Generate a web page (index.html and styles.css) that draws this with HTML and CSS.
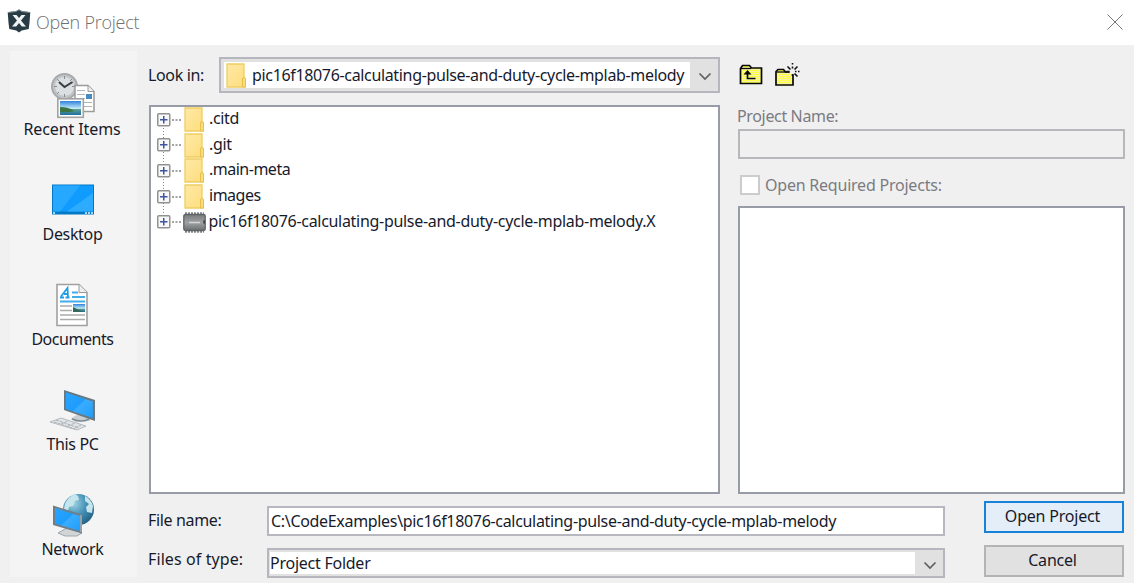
FILE: index.html
```html
<!DOCTYPE html>
<html lang="en">
<head>
<meta charset="utf-8">
<title>Open Project</title>
<link rel="stylesheet" href="styles.css">
</head>
<body>
<svg class="defs" width="0" height="0">
  <defs>
    <linearGradient id="fold" x1="0" y1="0" x2="1" y2="1"><stop offset="0" stop-color="#ffe9a6"/><stop offset="1" stop-color="#fddd7d"/></linearGradient>
    <linearGradient id="screen" x1="0" y1="0" x2="1" y2="1"><stop offset="0" stop-color="#2aa4ff"/><stop offset=".48" stop-color="#1e9dfd"/><stop offset=".52" stop-color="#3aacff"/><stop offset="1" stop-color="#1f9dfb"/></linearGradient>
    <linearGradient id="photo" x1="0" y1="0" x2="0" y2="1"><stop offset="0" stop-color="#2f83dc"/><stop offset=".55" stop-color="#c8ecfa"/><stop offset=".6" stop-color="#5c9f8b"/><stop offset="1" stop-color="#1c6fa8"/></linearGradient>
    <linearGradient id="chip" x1="0" y1="0" x2="0" y2="1"><stop offset="0" stop-color="#777a7b"/><stop offset=".5" stop-color="#a0a3a3"/><stop offset="1" stop-color="#6b6e6f"/></linearGradient>
    <radialGradient id="globe" cx=".35" cy=".3" r=".8"><stop offset="0" stop-color="#9fd3e4"/><stop offset=".5" stop-color="#4491b5"/><stop offset="1" stop-color="#1e5c80"/></radialGradient>
    <pattern id="dither" width="2" height="2" patternUnits="userSpaceOnUse"><rect width="2" height="2" fill="#ffff45"/><rect width="1" height="1" fill="#f4f4a4"/><rect x="1" y="1" width="1" height="1" fill="#f4f4a4"/></pattern>
    <symbol id="folder" viewBox="0 0 20 25"><path d="M1 1h17v18h1v5H1z" fill="url(#fold)" stroke="#f0cd61" stroke-width="1.300"/><path d="M16.500 24v-8q0-1.500 1.500-1.500t1.500 1.500v8z" fill="#fbdc7c" stroke="#e8c04c"/></symbol>
    <symbol id="plus" viewBox="0 0 24 14"><path d="M15 7h9" stroke="#858585" stroke-width="1.300" stroke-dasharray="2 1.500"/><rect x=".75" y=".75" width="12" height="12" rx="1" fill="#f8f8f8" stroke="#919191" stroke-width="1.500"/><path d="M3 6.750h7.500M6.750 3v7.500" stroke="#3f55a0" stroke-width="1.500"/></symbol>
    <symbol id="arrow" viewBox="0 0 14 9"><path d="M1.500 1.500L7 7l5.500-5.500" fill="none" stroke="#606060" stroke-width="1.700"/></symbol>
  </defs>
</svg>
<div class="dialog">
  <header class="titlebar">
    <svg class="app-icon" width="24" height="24" viewBox="0 0 24 24"><path d="M12 .5l3 1.800 8.300 1-.8 10.500-.8 6.200-7 1.500L12 23.500l-2.700-2-7-1.500-.8-6.200L.7 3.300 9 2.300z" fill="#293c46"/><path d="M1 3.500l8-1 3-1.700 3 1.700 8 1" fill="none" stroke="#7d8b91"/><path d="M5.500 6h4l2.500 3 2.500-3h4l-4.500 5.500 5 6h-4.200L12 14l-2.800 3.500H5l5-6z" fill="#f1f3f4"/></svg>
    <span class="title">Open Project</span>
    <svg class="close" width="16" height="16" viewBox="0 0 16 16"><path d="M.5.5l15 15M15.500.5l-15 15" stroke="#777" stroke-width="1"/></svg>
  </header>
  <div class="body">
    <nav class="places">
      <a class="place"><svg class="place-icon" viewBox="0 0 48 48"><circle cx="17.500" cy="15.500" r="12.500" fill="#c1c5c8" stroke="#a7abad" stroke-width="2"/><circle cx="17.500" cy="15.500" r="9.500" fill="#dcdfe1"/><path d="M17.500 5v3M17.500 23v3M7 15.500h3M25 15.500h3M10 8l2 2M25 8l-2 2M10 23l2-2" stroke="#858b90"/><path d="M12 11l5.500 5 8-5" fill="none" stroke="#363c42" stroke-width="2"/><path d="M28 14.500h13l6 6v20H28z" fill="#fff" stroke="#9a9a9a" stroke-width="1.500"/><path d="M41 14.500v6h6" fill="#eee" stroke="#9a9a9a"/><path d="M30 19.500h8M30 23.500h8M30 27.500h8M37 31.500h8M37 35.500h8" stroke="#b4b4b4"/><path d="M39 23h6v5h-6z" fill="#468cc2"/><rect x="10.800" y="27.800" width="25.500" height="18.500" fill="#fff" stroke="#a2a2a2" stroke-width="1.600"/><rect x="13" y="30" width="21" height="14" fill="url(#photo)"/><path d="M13 36q9 0 14 4-7 2-14 1z" fill="#3c7544"/></svg><span class="recent">Recent Items</span></a>
      <a class="place"><svg class="place-icon" viewBox="0 0 48 48"><rect x="5" y="8.500" width="42" height="30" fill="#0078c4"/><rect x="6" y="9.500" width="40" height="26" fill="#109cff"/><path d="M6 9.500h27L13 35.500H6z" fill="#27a8ff"/><path d="M46 17v18.500H20z" fill="#2dacff"/><path d="M6 37h2M38 37h2m1 0h2m1 0h2" stroke="#dff2ff" stroke-width="1.300"/></svg><span>Desktop</span></a>
      <a class="place"><svg class="place-icon" viewBox="0 0 48 48"><path d="M10 3.500h22l8 8v33H10z" fill="#fff" stroke="#a0a0a0" stroke-width="1.600"/><path d="M32 3.500v8h8" fill="#eee" stroke="#999"/><path d="M13 16.500h4M18.500 16.500h4M14 15.500L20.500 7 21 16.500M17 13h4" fill="none" stroke="#259de3" stroke-width="1.800"/><path d="M25 11.500h6M25 16h13M13 20.500h25" stroke="#42aee9" stroke-width="1.800"/><path d="M13 25h12M13 29.500h12M13 34h25M13 38.500h25" stroke="#ababab" stroke-width="1.300"/><rect x="26" y="23" width="12" height="8" fill="url(#photo)"/><path d="M26 26l10 5H26z" fill="#35675c"/></svg><span class="documents">Documents</span></a>
      <a class="place"><svg class="place-icon" viewBox="0 0 48 48"><path d="M26 31l8-4 10 4-1 4-14 1-5-3z" fill="#c8ced2"/><path d="M25 33q10 4 17 0" stroke="#7f8b93" fill="none" stroke-width="1.500"/><path d="M17 4l31 10v21L17 24z" fill="#687780"/><path d="M18.800 6.500l27 9V32l-27-9z" fill="url(#screen)"/><path d="M3 36l11-4 25 8-9 4z" fill="#e1e4e6" stroke="#b5bbc0"/><path d="M9 34l23 8M7 36l21 7M14 38l7-3M21 40l7-3M28 42l6-3" stroke="#abb3ba" stroke-dasharray="3 1"/></svg><span>This PC</span></a>
      <a class="place"><svg class="place-icon" viewBox="0 0 48 48"><circle cx="31.500" cy="18.500" r="15.500" fill="url(#globe)"/><path d="M18 13q3-7 10-10l3 2 1 4-4 1-2 5-4 1-1 4-4-2zM38 5q6 3 8 10l-1 7-5-1-1-5 3-3-4-3z" fill="#c5e4ec"/><path d="M18 38l7-2 7 3 3 3-5 3H18l-7-3z" fill="#d1d5d8" stroke="#a0a7ad"/><path d="M6 14.500l29 9v19l-29-8.500z" fill="#6f7f88"/><path d="M8 17l25 8v15L8 32.500z" fill="url(#screen)"/><path d="M34 24v17" stroke="#b8c4ca"/></svg><span>Network</span></a>
    </nav>
    <main class="main">
      <div class="panes">
        <section class="browser">
          <div class="look-in">
            <label>Look in:</label>
            <div class="combo">
              <div class="combo-value"><svg width="20" height="25"><use href="#folder"/></svg><span class="look-value">pic16f18076-calculating-pulse-and-duty-cycle-mplab-melody</span></div>
              <svg class="combo-arrow" width="14" height="9"><use href="#arrow"/></svg>
            </div>
          </div>
          <ul class="tree">
            <li><svg width="24" height="14"><use href="#plus"/></svg><svg class="node-icon" width="20" height="25"><use href="#folder"/></svg><span>.citd</span></li>
            <li><svg width="24" height="14"><use href="#plus"/></svg><svg class="node-icon" width="20" height="25"><use href="#folder"/></svg><span>.git</span></li>
            <li><svg width="24" height="14"><use href="#plus"/></svg><svg class="node-icon" width="20" height="25"><use href="#folder"/></svg><span class="tight">.main-meta</span></li>
            <li><svg width="24" height="14"><use href="#plus"/></svg><svg class="node-icon" width="20" height="25"><use href="#folder"/></svg><span class="tight">images</span></li>
            <li><svg width="24" height="14"><use href="#plus"/></svg><svg class="chip-icon" width="23" height="23" viewBox="0 0 23 23"><path d="M2 2.500h19M2 20.500h19" stroke="#85888a" stroke-width="2.600" stroke-dasharray="2 1"/><rect x=".8" y="3.500" width="21.400" height="16" rx="1.500" fill="url(#chip)" stroke="#606364" stroke-width="1.300"/><path d="M6 11.500h11" stroke="#d3d5d5" stroke-width="1.500"/><path d="M22 9a2 2 0 0 0 0 4" fill="#454748"/></svg><span class="tree-value">pic16f18076-calculating-pulse-and-duty-cycle-mplab-melody.X</span></li>
          </ul>
        </section>
        <section class="details">
          <div class="tools">
            <svg width="24" height="22" viewBox="0 0 24 22"><path d="M1.500 19.500V4.500l2-3h7l2 2.500h10v15.500z" fill="url(#dither)" stroke="#080808" stroke-width="1.700"/><path d="M2 4.500h10" stroke="#080808" stroke-width="1.300"/><path d="M8.500 8v6.500h8" fill="none" stroke="#080808" stroke-width="1.700"/><path d="M4.500 10.500l4-4.500 4 4.500z" fill="#080808"/></svg>
            <svg class="new-folder" width="26" height="24" viewBox="0 0 26 24"><path d="M2 22V8.500L4 6.500h5.500l2 2.500H19v13z" fill="url(#dither)" stroke="#080808" stroke-width="1.700"/><path d="M2.500 9h13" stroke="#080808" stroke-width="1.300"/><circle cx="18.500" cy="8.500" r="3" fill="#f0f0f0"/><path d="M18.500 0v1.500M18.500 3.500v2M18.500 11v2M12.500 8.500h3M21 8.500h1.500M24 8.500h1.500M13.500 3.500l3 3M23.500 3.500l-3 3M20.500 10.500l3 3" stroke="#111" stroke-width="1.600"/></svg>
          </div>
          <div class="name-label muted">Project Name:</div>
          <div class="name-field"></div>
          <div class="required muted"><span class="check"></span><span class="required-text">Open Required Projects:</span></div>
          <div class="project-list"></div>
        </section>
      </div>
      <div class="footer">
        <div class="fields">
          <div class="field-row"><label class="file-label">File name:</label><div class="input"><span class="file-value">C:\CodeExamples\pic16f18076-calculating-pulse-and-duty-cycle-mplab-melody</span></div></div>
          <div class="field-row"><label class="type-label">Files of type:</label><div class="combo type-combo"><div class="combo-value">Project Folder</div><svg class="combo-arrow" width="14" height="9"><use href="#arrow"/></svg></div></div>
        </div>
        <div class="actions"><button class="primary">Open Project</button><button>Cancel</button></div>
      </div>
    </main>
  </div>
</div>
</body>
</html>
```
FILE: styles.css
```css
* { box-sizing: border-box; }
body { margin: 0; font: 16px/20px "Noto Sans", sans-serif; letter-spacing: -0.35px; color: #171a2b; }
.defs { position: absolute; }
.dialog { width: 1134px; height: 583px; background: #f0f0f0; overflow: hidden; }
.titlebar { height: 45px; background: #fff; display: flex; align-items: center; padding: 0 11px 2px 7px; }
.app-icon { margin: -2px 5px 0 0; }
.title { font: 18px/24px "Open Sans", sans-serif; font-weight: 300; letter-spacing: -0.25px; color: #707070; flex: 1; padding-top: 1px; }
.body { display: flex; height: 538px; }
.places { width: 127px; height: 526px; margin: 6px 0 0 10px; padding: 20px 2px 0 0; background: #f4f4f4; display: flex; flex-direction: column; }
.place { flex: 0 0 105px; display: flex; flex-direction: column; align-items: center; white-space: nowrap; }
.place-icon { width: 48px; height: 48px; margin: 0 3px 0 0; }
.recent { letter-spacing: -0.1px; margin-left: -1px; }
.documents { letter-spacing: -0.45px; }
.main { margin-left: 12px; width: 976px; }
.panes { display: flex; height: 449px; }
.browser { width: 571px; padding-top: 12px; }
.look-in { display: flex; align-items: center; height: 36px; }
.look-in label { width: 71px; margin-left: -1px; }
.look-value { letter-spacing: -0.34px; }
.tree-value { letter-spacing: -0.3px; margin-left: -0.5px; }
.file-value { letter-spacing: -0.32px; }
.combo { flex: 1; height: 36px; border: 2px solid #b6b6be; background: #e1e1e1; padding: 3px 6px 3px 3px; display: flex; align-items: center; }
.combo-value { background: #fff; height: 26px; width: 466px; padding-left: 2px; display: flex; align-items: center; gap: 6px; white-space: nowrap; }
.combo-arrow { margin: 2px 0 0 auto; }
.tree { list-style: none; margin: 12px 0 0; padding: 0 0 0 6px; height: 389px; background: #fff; border: 2px solid #989ca6; background-image: repeating-linear-gradient(to bottom, #888 0 1px, #fff 1px 3px); background-size: 1px 100px; background-repeat: no-repeat; background-position: 12px 12px; }
.tree li { display: flex; align-items: center; height: 25.6px; white-space: nowrap; }
.tree li > span { margin-top: -3px; }
.tree .tight { letter-spacing: -0.5px; }
.tree .node-icon { margin: 0 5px 0 3px; }
.tree .chip-icon { margin: 1px 3px 0 2px; }
.details { margin-left: 18px; width: 387px; }
.tools { display: flex; height: 60px; padding: 19px 0 0 1px; gap: 11px; }
.new-folder { margin-top: -1px; }
.muted { color: #7b7b82; }
.name-label { margin-left: -1px; height: 24px; padding-top: 1px; }
.name-field { height: 30px; border: 2px solid #b7b7bc; }
.required { display: flex; align-items: center; gap: 5px; height: 47px; padding: 5px 0 0 2px; }
.required-text { letter-spacing: -0.22px; }
.check { width: 20px; height: 20px; border: 2px solid #ccc; background: #fff; }
.project-list { height: 288px; background: #fff; border: 2px solid #989ca6; }
.footer { display: flex; }
.fields { width: 796px; padding-top: 12px; }
.field-row { display: flex; height: 42px; }
.field-row label { width: 119px; margin-left: -1px; padding-top: 4px; }
.field-row .type-label { padding-top: 1px; letter-spacing: 0.1px; }
.input { flex: 1; height: 30px; background: #fff; border: 2px solid #b7b7bf; padding: 3px 2px; white-space: nowrap; }
.type-combo { height: 30px; }
.type-combo .combo-value { width: 645px; flex: none; height: 22px; padding-left: 0; margin-left: -2px; letter-spacing: -0.25px; }
.type-combo .combo-arrow { margin-top: 5px; }
.actions { margin-left: 39px; padding-top: 7px; display: flex; flex-direction: column; gap: 12px; }
button { width: 140px; height: 32px; padding: 0 3px 2px 0; font: inherit; letter-spacing: -0.2px; color: inherit; border: 2px solid #b4b4b4; background: #e1e1e1; }
.primary { border-color: #1683d8; background: #e4eef9; }
```
